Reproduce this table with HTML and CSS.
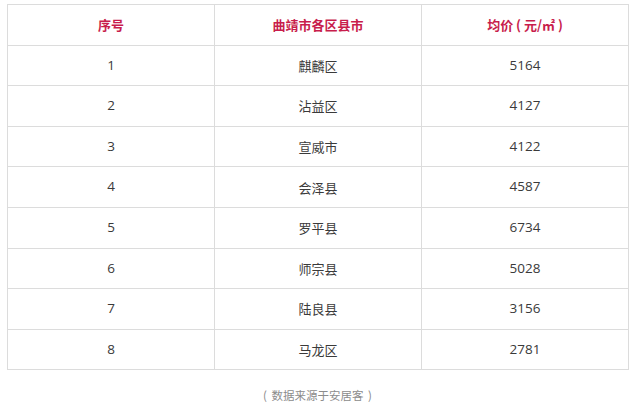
FILE: index.html
```html
<!DOCTYPE html>
<html lang="zh">
<head>
<meta charset="utf-8">
<link rel="stylesheet" href="styles.css">
</head>
<body>
<div class="page">
  <table class="price-table">
    <thead>
      <tr><th>序号</th><th>曲靖市各区县市</th><th>均价 ( 元/㎡ )</th></tr>
    </thead>
    <tbody>
      <tr><td>1</td><td>麒麟区</td><td>5164</td></tr>
      <tr><td>2</td><td>沾益区</td><td>4127</td></tr>
      <tr><td>3</td><td>宣威市</td><td>4122</td></tr>
      <tr><td>4</td><td>会泽县</td><td>4587</td></tr>
      <tr><td>5</td><td>罗平县</td><td>6734</td></tr>
      <tr><td>6</td><td>师宗县</td><td>5028</td></tr>
      <tr><td>7</td><td>陆良县</td><td>3156</td></tr>
      <tr><td>8</td><td>马龙区</td><td>2781</td></tr>
    </tbody>
  </table>
  <p class="source">( 数据来源于安居客 )</p>
</div>
</body>
</html>
```
FILE: styles.css
```css
html, body {
  margin: 0;
  padding: 0;
  background: #fff;
}
body {
  font-family: "Noto Sans CJK SC", "Liberation Sans", sans-serif;
  color: #333;
}
.page {
  padding: 4px 12px 0 7px;
}
.price-table {
  width: 622px;
  border-collapse: collapse;
  table-layout: fixed;
}
.price-table th,
.price-table td {
  border: 1px solid #dcdcdc;
  text-align: center;
  vertical-align: middle;
  height: 39.6px;
  padding: 0;
  font-size: 13px;
  line-height: 1;
}
.price-table th {
  color: #c81d4c;
  font-weight: bold;
}
.price-table td {
  color: #3a3a3a;
  font-family: "Noto Sans CJK SC", "Open Sans", sans-serif;
}
.price-table td:nth-child(odd) {
  font-family: "Open Sans", "Noto Sans CJK SC", sans-serif;
  font-size: 13.5px;
}
.source {
  margin: 0;
  padding-top: 17px;
  text-align: center;
  font-size: 11.5px;
  color: #8c8c8c;
  word-spacing: 2px;
}
```
